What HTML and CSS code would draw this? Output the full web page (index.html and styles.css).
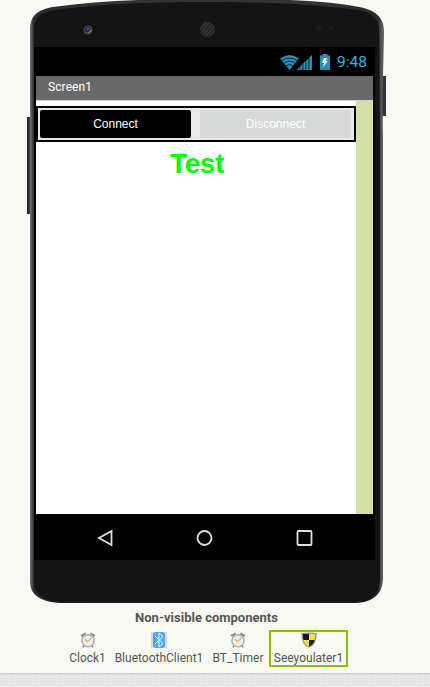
FILE: index.html
```html
<!DOCTYPE html>
<html lang="en">
<head>
<meta charset="utf-8">
<title>Screen1</title>
<link rel="stylesheet" href="styles.css">
</head>
<body>
<main class="viewer">
  <section class="phone">
    <svg class="phone-body" width="430" height="606" viewBox="0 0 430 606" aria-hidden="true">
      <defs>
        <linearGradient id="rim" x1="30" x2="384" y1="0" y2="0" gradientUnits="userSpaceOnUse">
          <stop offset="0" stop-color="#77797a"/><stop offset=".005" stop-color="#505253"/><stop offset=".011" stop-color="#292a2a"/><stop offset=".2" stop-color="#333"/><stop offset=".8" stop-color="#333"/><stop offset=".984" stop-color="#29292a"/><stop offset=".992" stop-color="#535355"/><stop offset="1" stop-color="#66666a"/>
        </linearGradient>
        <linearGradient id="key"><stop offset="0" stop-color="#222"/><stop offset="1" stop-color="#484848"/></linearGradient>
        <pattern id="mesh" width="3" height="3" patternUnits="userSpaceOnUse" patternTransform="rotate(-50)"><rect width="3" height="3" fill="#1b1b1b"/><path d="M0 1h3" stroke="#4a4a4a" stroke-width="1"/></pattern>
      </defs>
      <rect x="27" y="117" width="4" height="97" fill="url(#key)"/>
      <rect x="382" y="76" width="4" height="40" fill="#303030"/>
      <path fill="url(#rim)" d="M30 30C30 16 37 10 53 7C80 3.500 108 1 138 0H290C315 1 342 3.500 359 7C375 10 384 17 384 31C384 50 382 90 383 140V578C383 592 375 603 354 603H64C43 603 30 596 30 582Z"/>
      <path fill="#141414" d="M34 30C34 18 40 13 54 10C100 4 150 2 207 2C270 2 320 5 357 10C373 13 379 19 379 31L380 140V578C380 592 374 602.500 354 602.500H64C44 602.500 34 594 34 582Z"/>
      <circle cx="88" cy="30" r="4.500" fill="#4a4a4c"/><circle cx="87.500" cy="29.500" r="3" fill="#292745"/><circle cx="88" cy="29" r="1.200" fill="#5658a0"/><path d="M88.500 32.500l3-2" stroke="#999"/>
      <circle cx="207.500" cy="29.500" r="7.500" fill="url(#mesh)"/>
      <circle cx="319" cy="28" r="3" fill="#1f1b1c"/><circle cx="331" cy="28" r="2" fill="#1f1b1c"/>
    </svg>
    <div class="display">
      <div class="status">
        <svg width="52" height="18" viewBox="279 52 52 18" aria-hidden="true">
          <path fill="#298fb6" d="M280 57.500Q289.500 50.500 299 57.500L289.500 69Z"/>
          <path d="M281 60Q289.500 54 298 60M283.500 62.500Q289.500 58 295.500 62.500M286 65Q289.500 62 293 65" fill="none" stroke="#001018" stroke-width=".8"/>
          <path fill="#298fb6" d="M297.500 69v-1l2.200-2v3zM300.300 69v-4l2.300-2v6zM303.300 69v-7l2.300-2v9zM306.300 69v-9.500l2.300-2v11.500zM309.300 69v-12.500l2.700-2.500v15z"/>
          <path fill="#298fb6" d="M320 54.500h2.500v-1.500h5v1.500h2.500V69h-10z"/>
          <path fill="#fff" d="M324 57h3l-1 3h2l-5 6 1-4h-2z"/>
        </svg>
        <time>9:48</time>
      </div>
      <div class="title">Screen1</div>
      <div class="content">
        <div class="canvas">
          <div class="arrangement">
            <div class="button connect">Connect</div>
            <div class="button disconnect">Disconnect</div>
          </div>
          <div class="test">Test</div>
        </div>
      </div>
      <nav class="nav">
        <svg width="18" height="18" viewBox="0 0 18 18"><path d="M15.500 2v14L3 9z"/></svg>
        <svg width="18" height="18" viewBox="0 0 18 18"><circle cx="8.500" cy="9" r="7"/></svg>
        <svg width="18" height="18" viewBox="0 0 18 18"><rect x="2.500" y="2" width="14" height="14" rx="1"/></svg>
      </nav>
    </div>
  </section>
  <section class="components">
    <h2>Non-visible components</h2>
    <div class="list">
      <div class="item clock">
        <svg width="16" height="16" viewBox="0 0 16 16"><path d="M.5 3l5-2.500.5 1.500-4 3zM15.500 3l-5-2.500-.5 1.500 4 3z" fill="#8b8b8b"/><path d="M4 13l-1 2.500M12 13l1 2.500" stroke="#888" stroke-width="1.500"/><circle cx="8" cy="8.800" r="6.100" fill="#eee" stroke="#aaa" stroke-width="1.400"/><path d="M4.500 7l3 2.500L11.500 6" fill="none" stroke="#f0b45b" stroke-width="1.500"/></svg>
        <span>Clock1</span>
      </div>
      <div class="item bluetooth">
        <svg width="16" height="16" viewBox="0 0 16 16"><path fill="#d9d9d9" d="M0 0h16v16H0z"/><rect x="2" width="12" height="16" rx="3" fill="#4fa3fb"/><path d="M4 4l8 7.500L8 15V1l4 3.500L4 12" fill="none" stroke="#fff" stroke-width="1"/></svg>
        <span>BluetoothClient1</span>
      </div>
      <div class="item timer">
        <svg width="16" height="16" viewBox="0 0 16 16"><path d="M.5 3l5-2.500.5 1.500-4 3zM15.500 3l-5-2.500-.5 1.500 4 3z" fill="#8b8b8b"/><path d="M4 13l-1 2.500M12 13l1 2.500" stroke="#888" stroke-width="1.500"/><circle cx="8" cy="8.800" r="6.100" fill="#eee" stroke="#aaa" stroke-width="1.400"/><path d="M4.500 7l3 2.500L11.500 6" fill="none" stroke="#f0b45b" stroke-width="1.500"/></svg>
        <span>BT_Timer</span>
      </div>
      <div class="item selected">
        <svg width="16" height="16" viewBox="0 0 16 16"><path d="M.3 1Q8 .2 15.700 1Q16 13 8 15.800Q0 13 .3 1Z" fill="#969696"/><path d="M2 2h6v6H2.500Q1.700 5 2 2zM8 8h5.500Q12.500 12.500 8 14.500z" fill="#191919"/><path d="M8 2h6q.3 3-.5 6H8zM2.500 8H8v6.500Q3.500 12.500 2.500 8z" fill="#f4e238"/></svg>
        <span>Seeyoulater1</span>
      </div>
    </div>
  </section>
</main>
<footer class="footer"></footer>
</body>
</html>
```
FILE: styles.css
```css
* { box-sizing: border-box; }
body { margin: 0; width: 430px; height: 687px; overflow: hidden; display: flex; flex-direction: column; background: #f8f9f3; font-family: Roboto, sans-serif; }
svg { display: block; flex-shrink: 0; }
.viewer { height: 673px; }
.phone { position: relative; height: 606px; padding: 47px 0 0 34px; }
.phone-body { position: absolute; inset: 0; }
.display { position: relative; width: 341px; height: 513px; padding: 0 2px; background: #000; }
.status { height: 29px; display: flex; justify-content: flex-end; align-items: center; gap: 6px; padding-right: 6px; color: #33b5e5; font-size: 15.500px; line-height: 20px; }
.status time { width: 30px; padding-top: 1px; white-space: nowrap; }
.title { height: 24px; padding-left: 12px; background: #696969; color: #fff; font-size: 12px; font-weight: 400; letter-spacing: .1px; line-height: 22px; }
.content { height: 414px; padding-right: 17px; background: #d2e0a6; border-top: 1px solid #d0d0d0; }
.canvas { height: 413px; padding-top: 5px; background: #fff; }
.arrangement { height: 36px; display: flex; gap: 9px; padding: 2px; border: 2px solid #000; background: #e8e8e8; }
.button { width: 151px; height: 28px; border-radius: 2px; font: 12px/28px "Liberation Sans", sans-serif; text-align: center; color: #fff; }
.connect { background: #000; }
.disconnect { background: #d5d8d7; }
.test { padding: 6px 0 0 2px; text-align: center; color: #0f0; font: bold 28px/32px "Liberation Sans", sans-serif; letter-spacing: -.4px; }
.nav { height: 46px; display: flex; justify-content: space-between; align-items: center; padding: 1px 60px 0; }
.nav svg { fill: none; stroke: #e0e0e0; stroke-width: 1.800; }
.components { padding-top: 3px; color: #555; }
.components h2 { margin: 0; padding-right: 17px; text-align: center; font-size: 13px; line-height: 18px; font-weight: 700; }
.list { display: flex; margin: 3px 0 0 69px; height: 37px; font-size: 12px; line-height: 16px; }
.item { display: flex; flex-direction: column; align-items: center; gap: 2px; padding-top: 2px; white-space: nowrap; }
.clock { width: 37px; }
.bluetooth { width: 90px; margin-left: 8px; }
.timer { width: 52px; margin-left: 8px; }
.selected { width: 79px; margin-left: 5px; padding-top: 0; border: 2px solid #8fbd00; }
.footer { flex: 1; border-top: 1px solid #ccc; background-color: #e8e8e8; background-image: radial-gradient(#d5d5d5 .8px, transparent 1px); background-size: 3px 3px; box-shadow: inset 0 1px 1px #ddd; }
```
